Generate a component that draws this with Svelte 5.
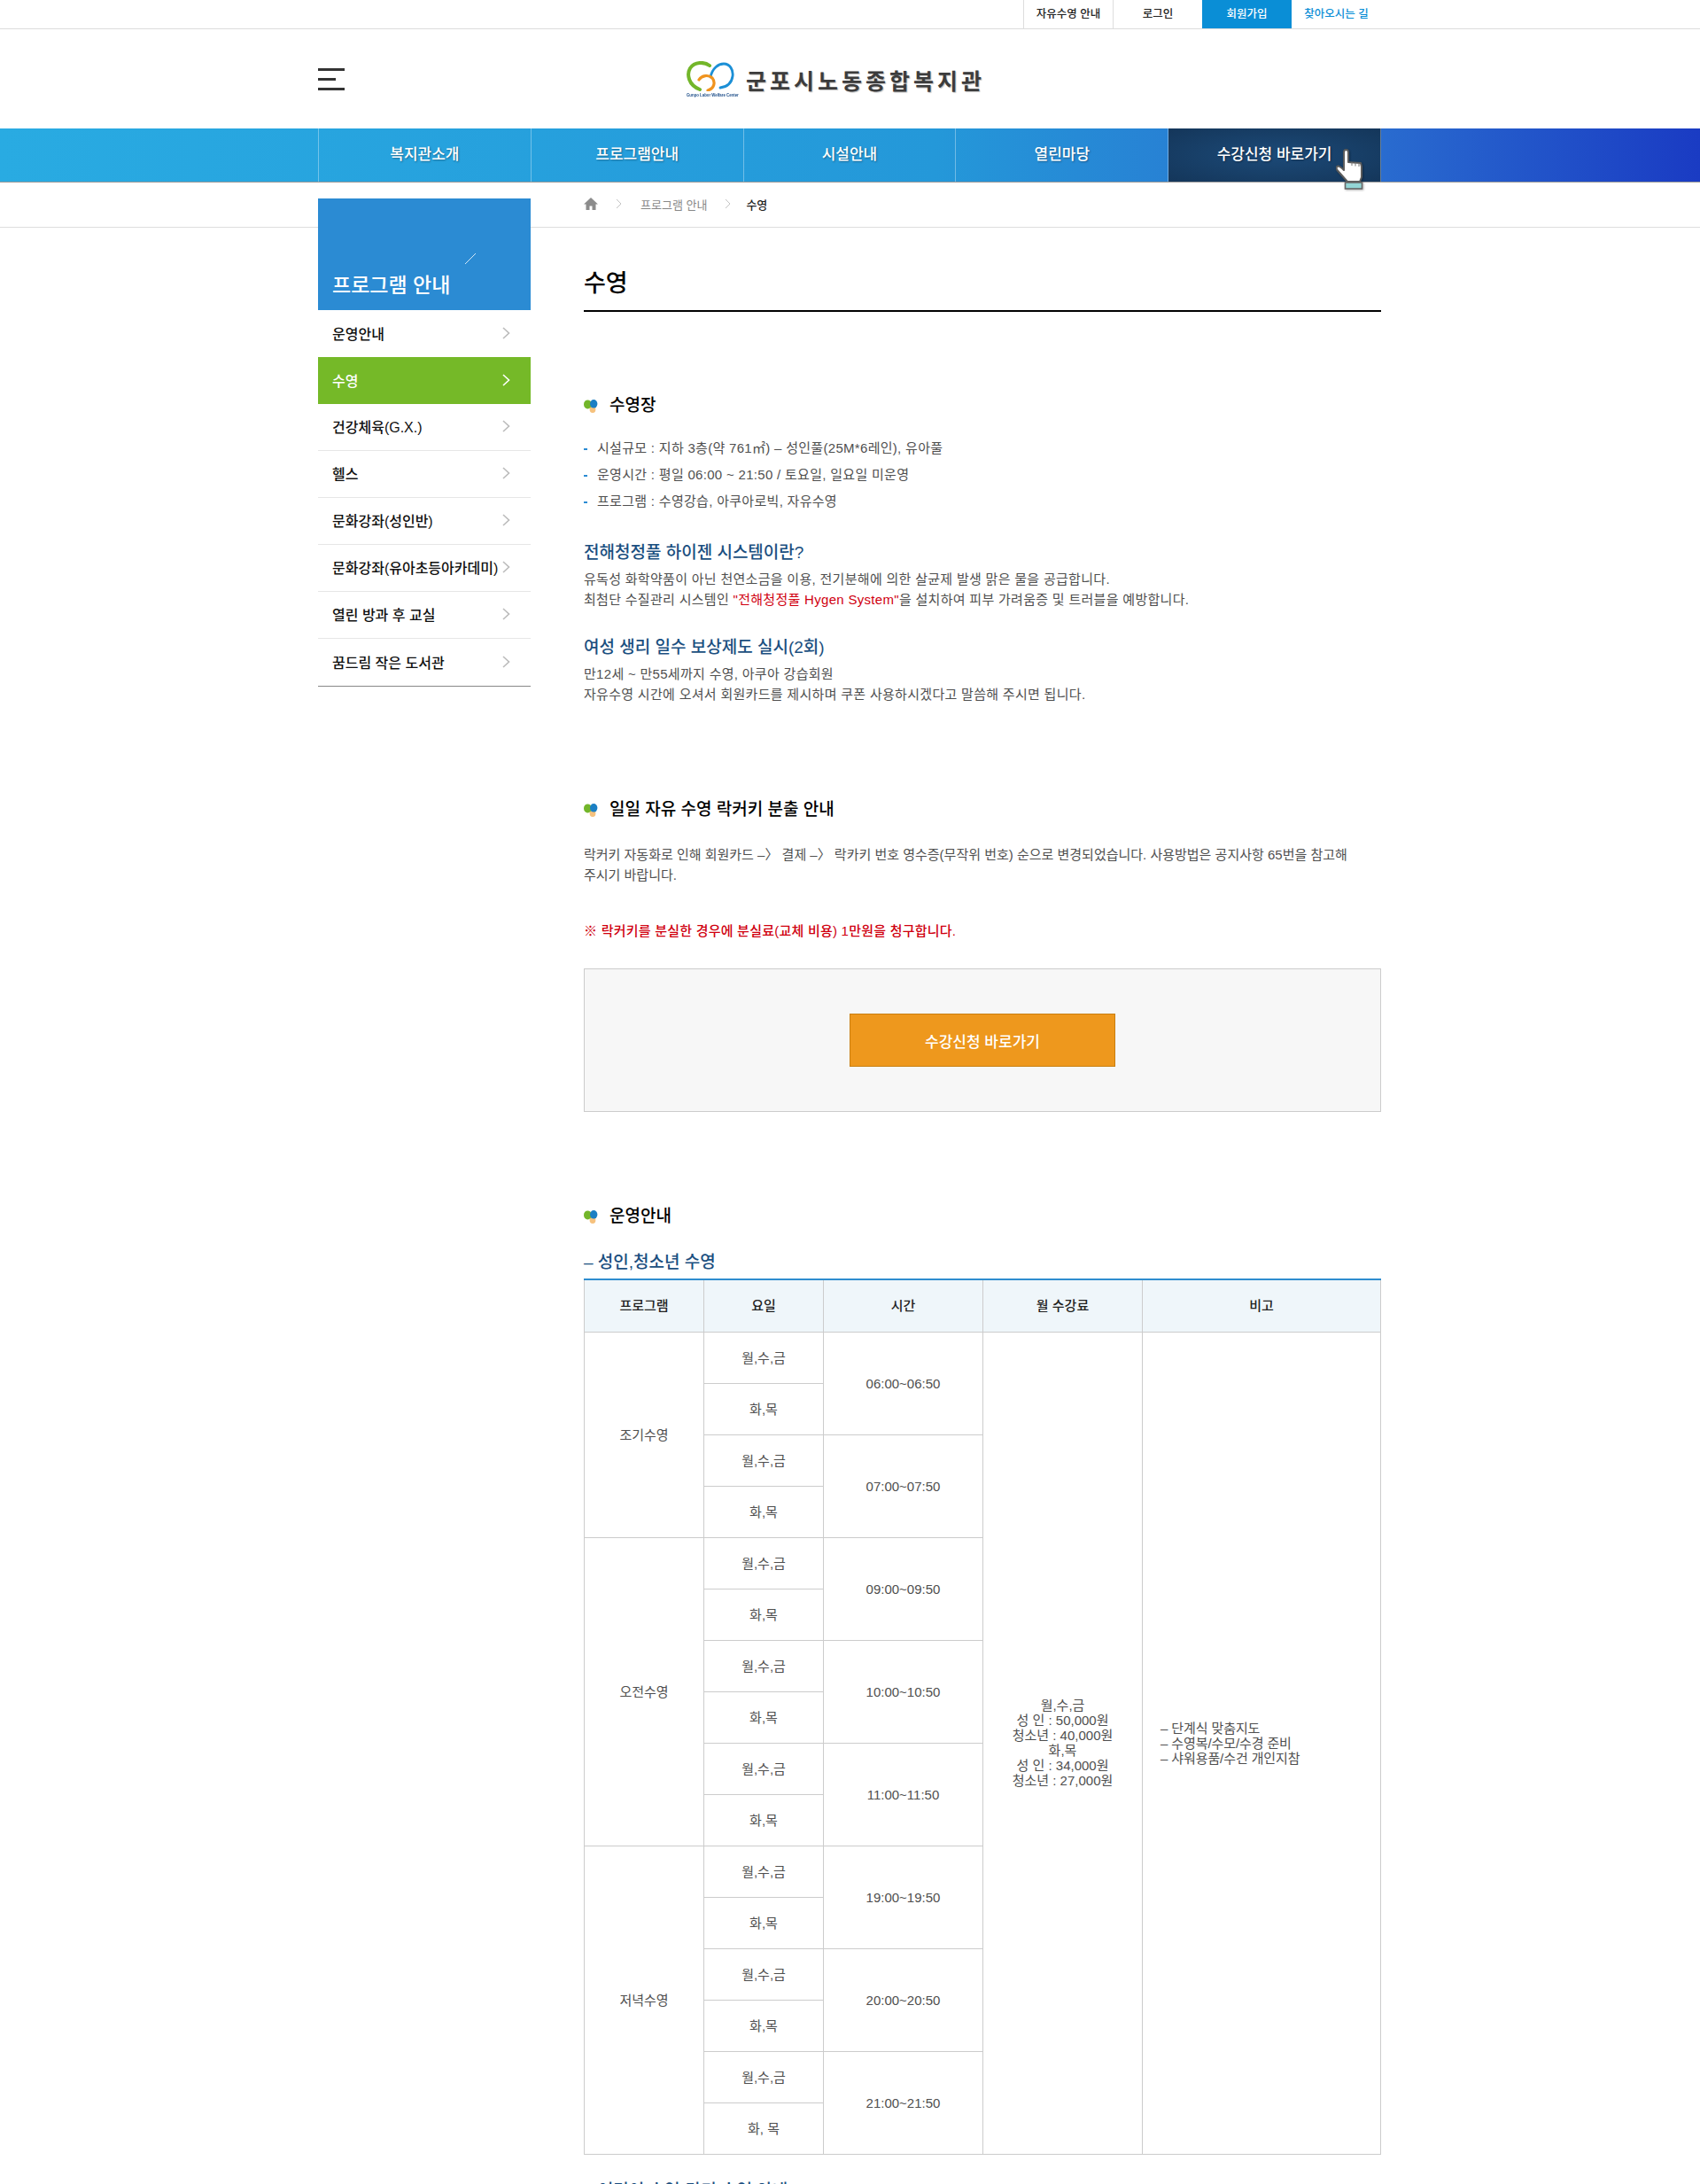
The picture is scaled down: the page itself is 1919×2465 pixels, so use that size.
<script>
  const topLinks = [
    { label: "자유수영 안내", kind: "plain" },
    { label: "로그인", kind: "plain" },
    { label: "회원가입", kind: "join" },
    { label: "찾아오시는 길", kind: "map" }
  ]
  const mainMenu = ["복지관소개", "프로그램안내", "시설안내", "열린마당"]
  const sideMenu = [
    "운영안내",
    "수영",
    "건강체육(G.X.)",
    "헬스",
    "문화강좌(성인반)",
    "문화강좌(유아초등아카데미)",
    "열린 방과 후 교실",
    "꿈드림 작은 도서관"
  ]
  const groups = [
    { name: "조기수영", slots: ["06:00~06:50", "07:00~07:50"] },
    { name: "오전수영", slots: ["09:00~09:50", "10:00~10:50", "11:00~11:50"] },
    { name: "저녁수영", slots: ["19:00~19:50", "20:00~20:50", "21:00~21:50"] }
  ]
  const fees = ["월,수,금", "성 인 : 50,000원", "청소년 : 40,000원", "화,목", "성 인 : 34,000원", "청소년 : 27,000원"]
  const notes = ["– 단계식 맞춤지도", "– 수영복/수모/수경 준비", "– 샤워용품/수건 개인지참"]
</script>

{#snippet bullet()}
  <svg class="bullet" viewBox="0 0 16 15" aria-hidden="true">
    <ellipse cx="10" cy="11" rx="3.4" ry="4" fill="#f6c27e" />
    <ellipse cx="4.4" cy="5.4" rx="4.4" ry="5" fill="#73b62a" />
    <ellipse cx="11.2" cy="4.8" rx="4.2" ry="4.8" fill="#1b7fc4" />
  </svg>
{/snippet}

{#snippet chevron()}
  <svg class="chev" viewBox="0 0 9 14" aria-hidden="true">
    <path d="M1 1l6.5 6L1 13" fill="none" stroke="currentColor" stroke-width="1.6" />
  </svg>
{/snippet}

<div class="page">
  <div class="topbar">
    <ul class="wrap toplinks">
      {#each topLinks as link}
        <li class={link.kind}>{link.label}</li>
      {/each}
    </ul>
  </div>

  <header class="wrap masthead">
    <div class="burger"><i></i><i class="short"></i><i></i></div>
    <div class="logo">
      <div class="mark">
        <svg viewBox="0 0 54 34" aria-hidden="true">
          <path d="M26 5C20 .5 9 .5 4 8C0 15 2 27 15 32" fill="none" stroke="#73b62a" stroke-width="4" stroke-linecap="round" />
          <path d="M27 18C29 8 36 3 42 3C49 3 53 10 52 17C51 24 46 29 38 30" fill="none" stroke="#1b8fd6" stroke-width="2.800" stroke-linecap="round" />
          <path d="M14 21C17 16 25 15 29 19C33 24 31 31 24 33" fill="none" stroke="#f0931e" stroke-width="3.200" stroke-linecap="round" />
        </svg>
        <span>Gunpo Labor Welfare Center</span>
      </div>
      <strong>군포시노동종합복지관</strong>
    </div>
  </header>

  <nav class="mainnav">
    <ul class="wrap">
      {#each mainMenu as item}
        <li>{item}</li>
      {/each}
      <li class="apply">
        수강신청 바로가기
        <svg class="hand" viewBox="0 0 36 48" aria-hidden="true">
          <path d="M9 4Q9 1 11.500 1Q14 1 14 4L14 15L20 15.500L28 16L29 20L29 32L27 37L13 37L1.500 24Q-.5 20 2.500 19.500Q4.500 19.500 9 24Z" fill="#fff" stroke="#5c5c5c" stroke-width="2" stroke-linejoin="round" />
          <path d="M18 15v4M22 15.500v4M26 16v4" stroke="#777" stroke-width="1" />
          <rect x="10.500" y="38" width="19" height="7" fill="#93d5d5" stroke="#666" stroke-width="1.600" />
        </svg>
      </li>
    </ul>
  </nav>

  <div class="subbar">
    <div class="wrap crumbs">
      <svg class="home" viewBox="0 0 16 14" aria-hidden="true">
        <path d="M8 0L16 7.500H13.500V14H9.500V9.500H6.500V14H2.500V7.500H0Z" fill="#8c8c8c" />
      </svg>
      <svg class="sep" viewBox="0 0 7 12" aria-hidden="true"><path d="M1 1l5 5-5 5" fill="none" stroke="#c4c4c4" /></svg>
      <span>프로그램 안내</span>
      <svg class="sep last" viewBox="0 0 7 12" aria-hidden="true"><path d="M1 1l5 5-5 5" fill="none" stroke="#c4c4c4" /></svg>
      <b>수영</b>
    </div>
  </div>

  <div class="wrap layout">
    <aside class="side">
      <div class="side-title">
        <svg class="spark" viewBox="0 0 12 12" aria-hidden="true"><path d="M0 12L12 0" stroke="#fff" stroke-width=".8" /></svg>
        <h2>프로그램 안내</h2>
      </div>
      <ul>
        {#each sideMenu as item}
          <li class:active={item === "수영"}>
            <span>{item}</span>
            {@render chevron()}
          </li>
        {/each}
      </ul>
    </aside>

    <main class="content">
      <h1>수영</h1>

      <h3 class="sec first">{@render bullet()}수영장</h3>
      <ul class="facts">
        <li>시설규모 : 지하 3층(약 761㎡) – 성인풀(25M*6레인), 유아풀</li>
        <li>운영시간 : 평일 06:00 ~ 21:50 / 토요일, 일요일 미운영</li>
        <li>프로그램 : 수영강습, 아쿠아로빅, 자유수영</li>
      </ul>

      <h4 class="blue">전해청정풀 하이젠 시스템이란?</h4>
      <p class="tight">유독성 화학약품이 아닌 천연소금을 이용, 전기분해에 의한 살균제 발생 맑은 물을 공급합니다.<br />최첨단 수질관리 시스템인 <em>"전해청정풀 Hygen System"</em>을 설치하여 피부 가려움증 및 트러블을 예방합니다.</p>

      <h4 class="blue">여성 생리 일수 보상제도 실시(2회)</h4>
      <p class="tight">만12세 ~ 만55세까지 수영, 아쿠아 강습회원<br />자유수영 시간에 오셔서 회원카드를 제시하며 쿠폰 사용하시겠다고 말씀해 주시면 됩니다.</p>

      <h3 class="sec second">{@render bullet()}일일 자유 수영 락커키 분출 안내</h3>
      <p class="locker">락커키 자동화로 인해 회원카드 –〉 결제 –〉 락카키 번호 영수증(무작위 번호) 순으로 변경되었습니다. 사용방법은 공지사항 65번을 참고해 주시기 바랍니다.</p>
      <p class="warn">※ 락커키를 분실한 경우에 분실료(교체 비용) 1만원을 청구합니다.</p>

      <div class="cta"><button type="button">수강신청 바로가기</button></div>

      <h3 class="sec third">{@render bullet()}운영안내</h3>
      <h4 class="blue table-title">– 성인,청소년 수영</h4>

      <table>
        <colgroup>
          <col class="c1" /><col class="c1" /><col class="c2" /><col class="c2" /><col />
        </colgroup>
        <thead>
          <tr><th>프로그램</th><th>요일</th><th>시간</th><th>월 수강료</th><th>비고</th></tr>
        </thead>
        <tbody>
          {#each groups as group, g}
            {#each group.slots as slot, s}
              <tr>
                {#if s === 0}
                  <td rowspan={group.slots.length * 2}>{group.name}</td>
                {/if}
                <td>월,수,금</td>
                <td rowspan="2">{slot}</td>
                {#if g === 0 && s === 0}
                  <td rowspan="16" class="fee">
                    {#each fees as line}<div>{line}</div>{/each}
                  </td>
                  <td rowspan="16" class="note">
                    {#each notes as line}<div>{line}</div>{/each}
                  </td>
                {/if}
              </tr>
              <tr><td>{slot === "21:00~21:50" ? "화, 목" : "화,목"}</td></tr>
            {/each}
          {/each}
        </tbody>
      </table>

      <h4 class="blue after">– 어린이 수영(단기 수영 안내)</h4>
    </main>
  </div>
</div>

<style>
  :global(body) {
    margin: 0;
    background: #fff;
  }

  .page {
    height: 2465px;
    overflow: hidden;
    font-family: "Liberation Sans", "Noto Sans CJK KR", sans-serif;
    font-size: 15px;
    color: #4f4f4f;
  }

  .wrap {
    width: 1200px;
    margin-left: 359px;
  }

  ul {
    list-style: none;
    margin: 0;
    padding: 0;
  }

  /* top utility links */
  .topbar {
    height: 32px;
    border-bottom: 1px solid #ddd;
  }

  .toplinks {
    display: flex;
    justify-content: flex-end;
  }

  .toplinks li {
    width: 101px;
    height: 32px;
    line-height: 33px;
    text-align: center;
    font-size: 12.5px;
    font-weight: 500;
    color: #222;
    box-sizing: border-box;
  }

  .toplinks li.plain {
    border-left: 1px solid #ddd;
  }

  .toplinks li.join {
    background: #0a8ed6;
    color: #fff;
  }

  .toplinks li.map {
    color: #0a8ed6;
  }

  /* logo row */
  .masthead {
    height: 112px;
    position: relative;
    display: flex;
    align-items: center;
    justify-content: center;
  }

  .burger {
    position: absolute;
    left: 0;
    top: 44px;
    width: 30px;
    display: flex;
    flex-direction: column;
    gap: 8px;
  }

  .burger i {
    display: block;
    height: 3px;
    background: #333;
  }

  .burger i.short {
    width: 20px;
  }

  .logo {
    display: flex;
    align-items: center;
    gap: 13px;
    margin-left: -31px;
    margin-top: 1px;
  }

  .mark {
    width: 54px;
    height: 42px;
    overflow: visible;
  }

  .mark svg {
    display: block;
    width: 54px;
    height: 34px;
  }

  .mark span {
    display: block;
    width: 90px;
    font-size: 6px;
    line-height: 8px;
    white-space: nowrap;
    transform: scaleX(.72);
    transform-origin: left;
    color: #1f4f8a;
    font-weight: 700;
  }

  .logo strong {
    font-size: 25px;
    letter-spacing: 4px;
    color: #3c3c3c;
    font-weight: 700;
    text-shadow: 1px 1px 1px rgba(0, 0, 0, .25);
    white-space: nowrap;
  }

  /* main navigation */
  .mainnav {
    height: 60px;
    background: linear-gradient(90deg, #29abe2 0%, #2498d9 55%, #2a6fd0 80%, #1a3bc3 100%);
    border-bottom: 1px solid #999;
  }

  .mainnav ul {
    display: flex;
    height: 60px;
    border-left: 1px solid rgba(255, 255, 255, .35);
    box-sizing: border-box;
  }

  .mainnav li {
    flex: 1;
    line-height: 60px;
    text-align: center;
    font-size: 17px;
    font-weight: 500;
    color: #fff;
    text-shadow: 1px 1px 2px rgba(0, 0, 0, .35);
    border-right: 1px solid rgba(255, 255, 255, .35);
  }

  .mainnav li.apply {
    position: relative;
    background: radial-gradient(ellipse at center, #1c4a78 0%, #14365a 100%);
  }

  .hand {
    position: absolute;
    left: 189px;
    top: 23px;
    width: 36px;
    height: 48px;
    filter: drop-shadow(1px 1px 1px rgba(0, 0, 0, .3));
  }

  /* breadcrumb */
  .subbar {
    height: 50px;
    border-bottom: 1px solid #ddd;
  }

  .crumbs {
    display: flex;
    align-items: center;
    height: 50px;
    padding: 0 0 2px 300px;
    box-sizing: border-box;
    font-size: 13px;
    color: #888;
  }

  .home {
    width: 16px;
    height: 14px;
  }

  .sep {
    width: 7px;
    height: 12px;
    margin: 0 21px 0 20px;
  }

  .sep.last {
    margin-right: 17px;
  }

  .crumbs b {
    color: #222;
    font-weight: 500;
  }

  /* sidebar + content */
  .layout {
    display: flex;
    gap: 60px;
    align-items: flex-start;
  }

  .side {
    width: 240px;
    margin-top: -33px;
    position: relative;
    border-bottom: 1px solid #888;
  }

  .side-title {
    height: 126px;
    background: #2b8bd3;
    position: relative;
  }

  .spark {
    position: absolute;
    left: 166px;
    top: 62px;
    width: 12px;
    height: 12px;
  }

  .side-title h2 {
    position: absolute;
    left: 16px;
    bottom: 11px;
    margin: 0;
    font-size: 23px;
    line-height: 34px;
    font-weight: 500;
    color: #fff;
    white-space: nowrap;
  }

  .side li {
    height: 53px;
    box-sizing: border-box;
    display: flex;
    align-items: center;
    justify-content: space-between;
    padding: 0 23px 2px 16px;
    font-size: 16px;
    font-weight: 500;
    color: #111;
    border-bottom: 1px solid #e6e6e6;
    white-space: nowrap;
  }

  .side li:last-child {
    border-bottom: 0;
  }

  .side li:first-child {
    border-bottom: 0;
  }

  .side li.active {
    background: #75b928;
    color: #fff;
    border-bottom: 0;
  }

  .chev {
    width: 9px;
    height: 14px;
    color: #bbb;
    flex: none;
  }

  .side li.active .chev {
    color: #fff;
  }

  .content {
    width: 900px;
  }

  h1 {
    margin: 0;
    padding: 42px 0 9px;
    font-size: 27px;
    line-height: 42px;
    font-weight: 500;
    color: #000;
    border-bottom: 2px solid #000;
  }

  .sec {
    display: flex;
    align-items: center;
    gap: 13px;
    margin: 0;
    font-size: 19px;
    line-height: 30px;
    font-weight: 500;
    color: #000;
  }

  .sec.first { margin-top: 91px; }
  .sec.second { margin-top: 104px; }
  .sec.third { margin-top: 103px; }

  .bullet {
    width: 16px;
    height: 15px;
    flex: none;
  }

  .facts {
    margin-top: 18px;
  }

  .facts li {
    line-height: 30px;
    padding-left: 15px;
    position: relative;
    letter-spacing: .3px;
  }

  .facts li::before {
    content: "";
    position: absolute;
    left: 0;
    top: 15px;
    width: 4px;
    height: 2px;
    background: #2b8bd3;
  }

  .blue {
    margin: 28px 0 0;
    font-size: 19px;
    line-height: 30px;
    font-weight: 500;
    color: #1b4f80;
  }

  p {
    margin: 0;
    line-height: 23px;
    word-break: keep-all;
  }

  p.tight {
    margin-top: 3px;
    letter-spacing: .3px;
  }

  p em {
    font-style: normal;
    color: #d0000f;
  }

  p.locker {
    margin-top: 24px;
  }

  p.warn {
    margin-top: 40px;
    color: #d0000f;
    font-weight: 500;
    letter-spacing: .23px;
  }

  .cta {
    margin-top: 31px;
    height: 162px;
    box-sizing: border-box;
    background: #f7f7f7;
    border: 1px solid #ccc;
    display: flex;
    align-items: center;
    justify-content: center;
  }

  .cta button {
    width: 300px;
    height: 60px;
    padding: 0;
    background: #ee981d;
    border: 1px solid #c97f10;
    color: #fff;
    font: 500 17px "Liberation Sans", "Noto Sans CJK KR", sans-serif;
  }

  .table-title {
    margin-top: 22px;
  }

  table {
    width: 900px;
    margin-top: 3px;
    border-collapse: collapse;
    table-layout: fixed;
    text-align: center;
  }

  .c1 { width: 135px; }
  .c2 { width: 180px; }

  th, td {
    border: 1px solid #ccc;
    padding: 0;
    height: 58px;
    box-sizing: border-box;
    line-height: 17px;
  }

  th {
    height: 59px;
    background: #eff6fa;
    border-top: 2px solid #2f8dcf;
    font-weight: 500;
    color: #222;
  }

  td.note {
    text-align: left;
    padding-left: 20px;
    letter-spacing: -.1px;
  }

  .after {
    margin-top: 26px;
  }
</style>
